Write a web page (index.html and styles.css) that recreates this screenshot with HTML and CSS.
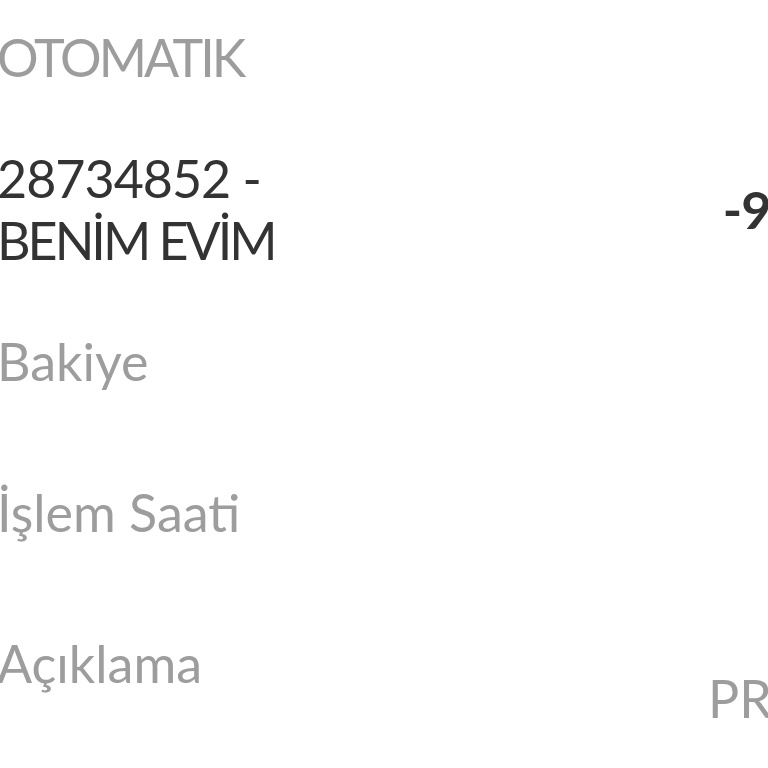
FILE: index.html
```html
<!DOCTYPE html>
<html lang="tr">
<head>
  <meta charset="UTF-8">
  <meta name="viewport" content="width=device-width, initial-scale=1.0">
  <title>İşlem Detayı</title>
  <link rel="stylesheet" href="styles.css">
</head>
<body>
  <div class="detail">
    <div class="row">
      <span class="label caps">OTOMATIK</span>
    </div>
    <div class="row">
      <div class="value">
        <div class="digits">28734852 -</div>
        <div class="caps">BENİM EVİM</div>
      </div>
      <span class="amount">-9.850,00 TL</span>
    </div>
    <div class="row row-wide">
      <span class="label">Bakiye</span>
    </div>
    <div class="row row-wide">
      <span class="label">İşlem Saati</span>
      <span class="value">14:32</span>
    </div>
    <div class="row row-top">
      <span class="label">Açıklama</span>
      <span class="label note">PROVİZYON</span>
    </div>
  </div>
</body>
</html>
```

FILE: styles.css
```css
* { margin:0; padding:0; box-sizing:border-box }
html, body { background:#fff; overflow:hidden; }
.detail {
  width:1008px; margin-left:-3px; padding-top:26px;
  font-family:Lato, 'Open Sans', sans-serif;
  font-size:52px; line-height:62px;
}
.row {
  display:flex; justify-content:space-between; align-items:center;
  margin-bottom:59px;
}
.row-wide { margin-bottom:89px; }
.row-top { align-items:flex-start; }
.label { color:#9d9d9d; }
.value { color:#333; }
.caps { letter-spacing:-3px; }
.digits { letter-spacing:-1px; }
.amount { color:#333; font-weight:700; text-align:right; white-space:nowrap; letter-spacing:-1px; }
.note { margin-top:35px; text-align:right; white-space:nowrap; }
```
